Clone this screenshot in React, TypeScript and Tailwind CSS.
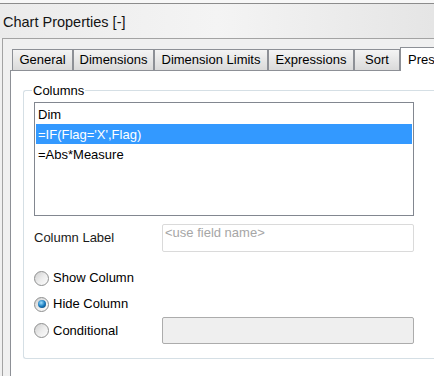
import { useState } from "react";

const tabs = [
  { label: "General", w: "w-[61px]" },
  { label: "Dimensions", w: "w-[81px]" },
  { label: "Dimension Limits", w: "w-[114px]" },
  { label: "Expressions", w: "w-[86px]" },
  { label: "Sort", w: "w-[46px]" },
];

const columns = ["Dim", "=IF(Flag='X',Flag)", "=Abs*Measure"];

const Radio = ({ checked }: { checked: boolean }) => (
  <span className="w-[15px] h-[15px] rounded-full border border-[#8e8f8f] bg-gradient-to-br from-[#cfcfcf] via-[#ececec] to-[#fdfdfd] flex items-center justify-center shrink-0">
    {checked && (
      <span className="w-[8px] h-[8px] rounded-full bg-[radial-gradient(circle_at_40%_35%,#9fe0ff,#1a7cbf_50%,#08365f)]" />
    )}
  </span>
);

const ChartProperties = () => {
  const [selected, setSelected] = useState<number>(1);
  const [mode, setMode] = useState<string>("hide");

  return (
    <div className="w-[434px] h-[376px] overflow-hidden bg-[#f0f0f0] font-['Liberation_Sans',Arial,sans-serif] text-[13px] text-black">
      <div className="h-[3px] bg-[#f7f7f7]" />
      <div className="h-[35px] border-t border-[#8c8c8c] bg-gradient-to-r from-[#ebebeb] via-[#f4f4f4] to-[#e5e5e5] pl-[3px] pt-[3px] flex items-center">
        <span className="text-[14.5px] text-[#141414]">Chart Properties [-]</span>
      </div>

      <div className="ml-[2px] min-w-[480px] h-full border-t border-l border-[#a3a3a3] pl-[7px] pt-[8px]">
        <div className="flex items-end h-[23px] pl-[2px]">
          {tabs.map((t) => (
            <div
              key={t.label}
              className={`${t.w} h-[21px] shrink-0 border border-b-0 border-[#8d9096] bg-gradient-to-b from-[#f4f4f4] to-[#dadada] flex items-center justify-center whitespace-nowrap cursor-pointer`}
            >
              {t.label}
            </div>
          ))}
          <div className="w-[80px] h-[24px] shrink-0 -mb-px relative border border-b-0 border-[#8d9096] bg-white pl-[7px] pt-[2px] whitespace-nowrap">
            Presentation
          </div>
        </div>

        <div className="min-w-[470px] h-full border-t border-l border-[#8d9096] bg-white pl-[12px] pt-[19px]">
          {/* group box, runs past the right edge */}
          <div className="relative min-w-[440px] w-[440px] border border-r-0 border-[#d5dfe5] rounded-l-[3px] pt-[11px] pb-[14px]">
            <span className="absolute -top-[8px] left-[8px] px-[1px] bg-white leading-[15px]">Columns</span>

            <div className="ml-[10px] w-[380px] h-[114px] border border-[#828790] bg-white pt-[1px] pl-[1px] pr-[1px]">
              {columns.map((c, i) => (
                <div
                  key={c}
                  onClick={() => setSelected(i)}
                  className={`h-[20px] pl-[2px] pt-[1px] flex items-center ${
                    selected === i ? "bg-[#3399ff] text-white" : "text-black"
                  }`}
                >
                  {c}
                </div>
              ))}
            </div>

            <div className="ml-[10px] mt-[8px] flex items-center h-[28px]">
              <span className="w-[128px] text-[#1a1a1a]">Column Label</span>
              <input
                type="text"
                placeholder="<use field name>"
                className="w-[252px] h-[28px] border border-[#dadada] rounded-[2px] pl-[2px] pb-[11px] text-[13px] placeholder:text-[#a6a6a6] outline-none"
              />
            </div>

            <div className="ml-[10px] mt-[13px] flex flex-col">
              <label className="h-[26px] flex items-center gap-[4px]" onClick={() => setMode("show")}>
                <Radio checked={mode === "show"} />
                <span>Show Column</span>
              </label>
              <label className="h-[26px] flex items-center gap-[4px]" onClick={() => setMode("hide")}>
                <Radio checked={mode === "hide"} />
                <span>Hide Column</span>
              </label>
              <div className="h-[27px] flex items-center">
                <label className="w-[128px] flex items-center gap-[4px]" onClick={() => setMode("cond")}>
                  <Radio checked={mode === "cond"} />
                  <span>Conditional</span>
                </label>
                <div className="w-[252px] h-[27px] border border-[#acacac] rounded-[2px] bg-[#efefef]" />
              </div>
            </div>
          </div>
        </div>
      </div>
    </div>
  );
};

export default function App() {
  return <ChartProperties />;
}
